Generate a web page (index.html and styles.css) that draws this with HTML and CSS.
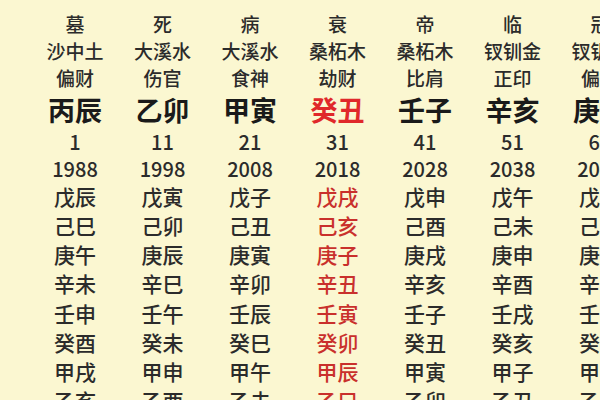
FILE: index.html
```html
<!DOCTYPE html>
<html lang="zh-CN">
<head>
<meta charset="utf-8">
<link rel="stylesheet" href="styles.css">
</head>
<body>
<div class="board">
  <div class="col">
    <div class="c s">墓</div><div class="c s">沙中土</div><div class="c s">偏财</div><div class="c big">丙辰</div>
    <div class="c n1">1</div><div class="c n2">1988</div>
    <div class="c g">戊辰</div><div class="c g">己巳</div><div class="c g">庚午</div><div class="c g">辛未</div><div class="c g">壬申</div><div class="c g">癸酉</div><div class="c g">甲戌</div><div class="c g">乙亥</div>
  </div>
  <div class="col">
    <div class="c s">死</div><div class="c s">大溪水</div><div class="c s">伤官</div><div class="c big">乙卯</div>
    <div class="c n1">11</div><div class="c n2">1998</div>
    <div class="c g">戊寅</div><div class="c g">己卯</div><div class="c g">庚辰</div><div class="c g">辛巳</div><div class="c g">壬午</div><div class="c g">癸未</div><div class="c g">甲申</div><div class="c g">乙酉</div>
  </div>
  <div class="col">
    <div class="c s">病</div><div class="c s">大溪水</div><div class="c s">食神</div><div class="c big">甲寅</div>
    <div class="c n1">21</div><div class="c n2">2008</div>
    <div class="c g">戊子</div><div class="c g">己丑</div><div class="c g">庚寅</div><div class="c g">辛卯</div><div class="c g">壬辰</div><div class="c g">癸巳</div><div class="c g">甲午</div><div class="c g">乙未</div>
  </div>
  <div class="col current">
    <div class="c s">衰</div><div class="c s">桑柘木</div><div class="c s">劫财</div><div class="c big">癸丑</div>
    <div class="c n1">31</div><div class="c n2">2018</div>
    <div class="c g">戊戌</div><div class="c g">己亥</div><div class="c g">庚子</div><div class="c g">辛丑</div><div class="c g">壬寅</div><div class="c g">癸卯</div><div class="c g">甲辰</div><div class="c g">乙巳</div>
  </div>
  <div class="col">
    <div class="c s">帝</div><div class="c s">桑柘木</div><div class="c s">比肩</div><div class="c big">壬子</div>
    <div class="c n1">41</div><div class="c n2">2028</div>
    <div class="c g">戊申</div><div class="c g">己酉</div><div class="c g">庚戌</div><div class="c g">辛亥</div><div class="c g">壬子</div><div class="c g">癸丑</div><div class="c g">甲寅</div><div class="c g">乙卯</div>
  </div>
  <div class="col">
    <div class="c s">临</div><div class="c s">钗钏金</div><div class="c s">正印</div><div class="c big">辛亥</div>
    <div class="c n1">51</div><div class="c n2">2038</div>
    <div class="c g">戊午</div><div class="c g">己未</div><div class="c g">庚申</div><div class="c g">辛酉</div><div class="c g">壬戌</div><div class="c g">癸亥</div><div class="c g">甲子</div><div class="c g">乙丑</div>
  </div>
  <div class="col">
    <div class="c s">冠</div><div class="c s">钗钏金</div><div class="c s">偏印</div><div class="c big">庚戌</div>
    <div class="c n1">61</div><div class="c n2">2048</div>
    <div class="c g">戊辰</div><div class="c g">己巳</div><div class="c g">庚午</div><div class="c g">辛未</div><div class="c g">壬申</div><div class="c g">癸酉</div><div class="c g">甲戌</div><div class="c g">乙亥</div>
  </div>
</div>
</body>
</html>
```
FILE: styles.css
```css
html, body {
  margin: 0;
  padding: 0;
  width: 600px;
  height: 400px;
  overflow: hidden;
  background: #fbf7d1;
}
.board {
  display: grid;
  grid-template-columns: repeat(7, 87.5px);
  padding: 9.5px 0 0 31.25px;
  font-family: "Noto Sans CJK SC", "Noto Sans", sans-serif;
  font-weight: 500;
  color: #2b2b2b;
  white-space: nowrap;
}
.col {
  display: flex;
  flex-direction: column;
  align-items: center;
}
.c {
  text-align: center;
}
.s {
  font-size: 19px;
  height: 27px;
  line-height: 27px;
}
.big {
  font-size: 27px;
  font-weight: 700;
  height: 37px;
  line-height: 37px;
  color: #1a1a1a;
}
.n1 {
  font-size: 20px;
  height: 28px;
  line-height: 28px;
}
.n2 {
  font-size: 20px;
  height: 26px;
  line-height: 26px;
}
.g {
  font-size: 21px;
  height: 29.25px;
  line-height: 29.25px;
}
.current .big {
  color: #e0282a;
}
.current .g {
  color: #c9302c;
}
```
